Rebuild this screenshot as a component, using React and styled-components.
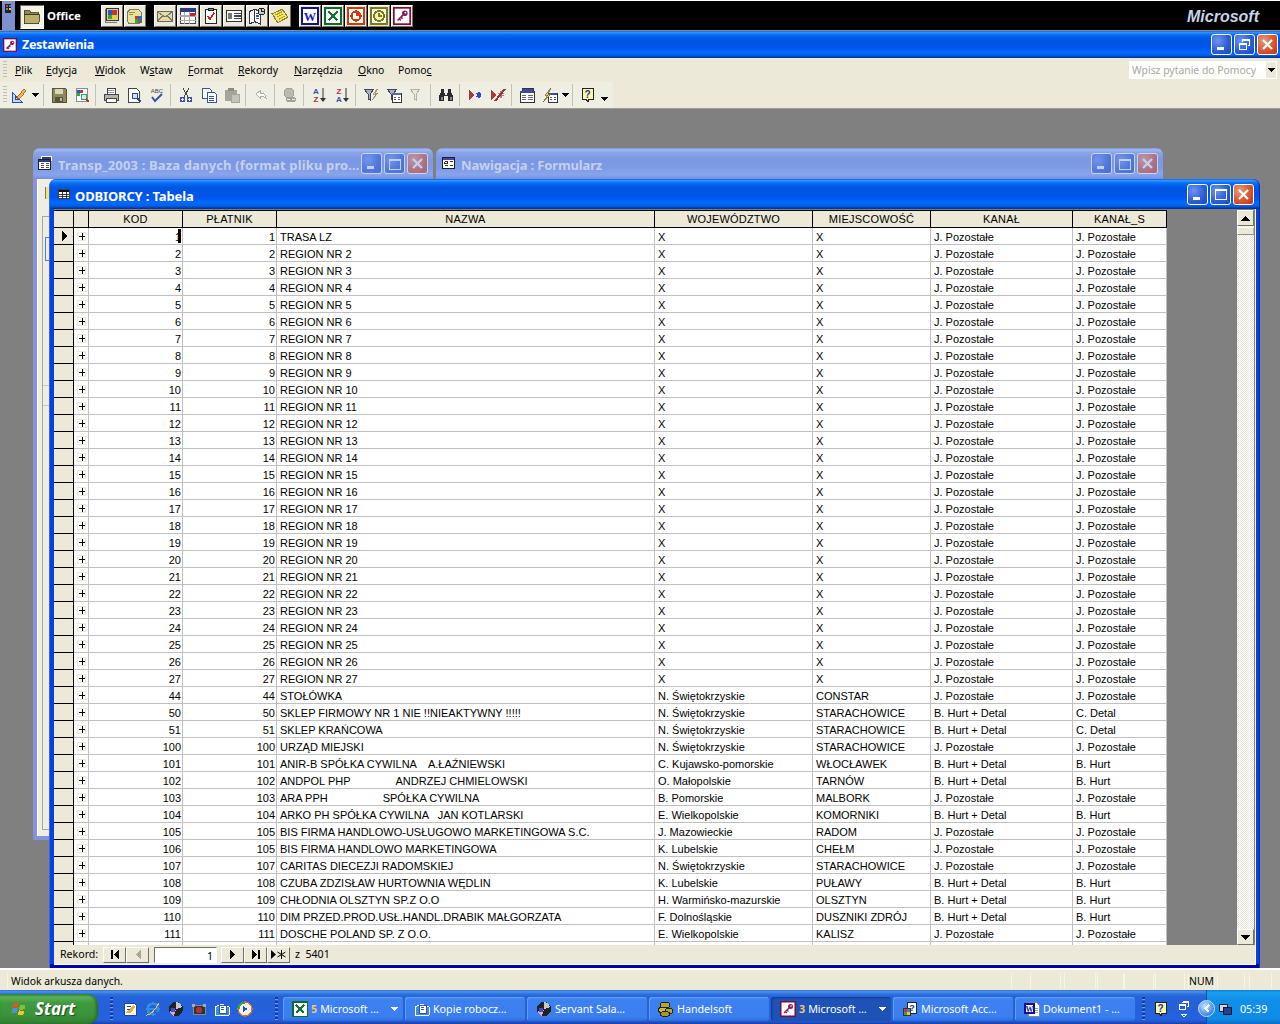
import React from "react";
import styled, { createGlobalStyle, css } from "styled-components";

const UI = `"Noto Sans", "DejaVu Sans", sans-serif`;
const SHEET = `"Liberation Sans", Arial, sans-serif`;
const BEIGE = "#ece9d8";
const ACTIVE_TITLE = `linear-gradient(180deg,#0058e6 0%,#3a93ff 4%,#288eff 7%,#127dff 10%,#036ffc 14%,#0262ee 20%,#0057e5 28%,#0054e3 40%,#0055eb 58%,#005bf5 68%,#026afe 78%,#0062ef 88%,#0052d6 93%,#0040ab 96%,#003092 100%)`;

const Global = createGlobalStyle`
  html, body { margin: 0; padding: 0; background: #808080; }
  * { box-sizing: border-box; }
`;

const Page = styled.div`
  width: 1280px; height: 1024px; display: flex; flex-direction: column; overflow: hidden;
  font: 10.4px ${UI}; color: #000; background: ${BEIGE};
`;

/* ---------- office bar ---------- */
const OfficeBar = styled.div`
  height: 31px; flex: none; display: flex; align-items: flex-start; background: #000;
  border-top: 1px solid #fff; border-bottom: 1px solid #8d8c80; padding-left: 2px;
`;
const OfficeCorner = styled.div`
  width: 13px; height: 29px; background: #7f8fd0; padding: 2px 1px; flex: none; display: flex; align-items: flex-start;
`;
const OfficeFolder = styled.div`
  width: 24px; height: 24px; margin: 4px 0 0 5px; background: #f4f2e4; flex: none; display: flex; align-items: center; justify-content: center;
  border: 1px solid; border-color: #716f64 #fff #fff #716f64;
`;
const OfficeLabel = styled.div`
  width: 57px; padding: 7px 0 0 3px; color: #fff; font: 700 11.4px/16px ${UI}; flex: none;
`;
const OfficeGroup = styled.div`
  display: flex; gap: 1px; margin: 4px 0 0 ${p => p.$gap}px; flex: none;
`;
const OfficeButton = styled.div`
  width: 22px; height: 22px; background: ${BEIGE}; display: flex; align-items: center; justify-content: center;
  border: 1px solid; border-color: #fff #716f64 #716f64 #fff;
`;
const Brand = styled.div`
  margin: 6px 21px 0 auto; font: italic 700 16px/20px ${SHEET}; color: #c9d3e8;
`;

/* ---------- title bars ---------- */
const TitleBar = styled.div`
  flex: none; display: flex; align-items: center; color: #fff; background: ${ACTIVE_TITLE};
  font: 700 13px/18px ${UI}; white-space: nowrap;
  height: ${p => p.$h || 26}px;
`;
const ChildTitleBar = styled(TitleBar)`
  margin: 0 -3px 0 -4px; border-radius: 7px 7px 0 0;
`;
const InactiveBar = styled(TitleBar)`
  background: linear-gradient(180deg,#7b97e2 0%,#a3b9ee 6%,#8aa5e8 14%,#7c98e3 35%,#7d9ae5 65%,#88a5ec 85%,#7690db 100%);
  color: #c4d0f0; border-radius: 7px 7px 0 0;
`;
const TitleIcon = styled.span`
  display: flex; flex: none; margin: 0 ${p => p.$r}px 0 ${p => p.$l}px;
`;
const TitleText = styled.span`
  flex: 1; min-width: 0; overflow: hidden; letter-spacing: ${p => p.$ls || 0}px; padding-top: ${p => p.$pt || 0}px;
  font-size: ${p => p.$fs || 13}px;
`;
const Controls = styled.div`
  display: flex; gap: 2px; flex: none; margin-right: ${p => p.$mr}px;
`;
const WinButton = styled.div`
  width: 21px; height: 21px; border-radius: 3px; border: 1px solid #fff; display: flex; align-items: center; justify-content: center;
  background: ${p => p.$close
    ? "radial-gradient(circle at 30% 30%, #e89a80, #d9562c 55%, #b8351a)"
    : "radial-gradient(circle at 30% 30%, #6f94f0, #2e5fd8 55%, #1c45c0)"};
  ${p => p.$faded && css`opacity: .55;`}
`;

/* ---------- menu & toolbar ---------- */
const MenuBar = styled.div`
  height: 24px; flex: none; display: flex; align-items: center; background: ${BEIGE}; padding-left: 3px;
`;
const Grab = styled.div`
  width: 4px; height: 18px; flex: none;
  background: repeating-linear-gradient(180deg,#c1beb0 0 1px,transparent 1px 3px);
`;
const MenuItem = styled.div`
  width: ${p => p.$w}px; flex: none; line-height: 16px;
  u { text-underline-offset: 1px; }
`;
const HelpBox = styled.div`
  margin: 0 3px 0 auto; width: 148px; height: 18px; background: #fff; display: flex; align-items: center;
  color: #a8a69a; padding-left: 3px;
`;
const HelpText = styled.span` flex: 1; `;
const HelpDrop = styled.span`
  width: 12px; height: 18px; background: ${BEIGE}; display: flex; align-items: center; justify-content: center; border: 1px solid #fff;
`;
const ToolRow = styled.div`
  height: 27px; flex: none; background: ${BEIGE}; border-bottom: 1px solid #9d9c8f; display: flex;
`;
const ToolStrip = styled.div`
  width: 613px; display: flex; align-items: center; background: #efeee2; padding-left: 3px; height: 26px;
`;
const ToolBtn = styled.div`
  width: 23px; height: 22px; flex: none; display: flex; align-items: center; justify-content: center;
`;
const ToolDrop = styled.div`
  width: ${p => p.$w || 10}px; flex: none; display: flex; justify-content: center; padding-top: ${p => p.$pt || 0}px;
`;
const ToolSep = styled.div`
  width: 1px; height: 22px; background: #c5c2b3; margin: 0 3px 0 2px; flex: none;
`;

/* ---------- workspace ---------- */
const Workspace = styled.div`
  flex: 1; position: relative; background: #808080; overflow: hidden;
`;
const Win = styled.div`
  position: absolute; left: ${p => p.$x}px; top: ${p => p.$y}px; width: ${p => p.$w}px; height: ${p => p.$h}px;
  display: flex; flex-direction: column;
`;
const BackWin = styled(Win)`
  background: #8592dd; border-radius: 7px 7px 0 0;
`;
const BackBody = styled.div`
  flex: 1; margin: 0 4px 4px; background: #f0eee1; border-left: 1px solid #fff; position: relative; padding: 37px 0 6px 4px;
`;
const BackList = styled.div`
  height: 100%; border: 1px solid #a8a698; border-right: 0; position: relative;
`;
const BackSel = styled.div`
  position: absolute; left: 2px; top: 20px; width: 8px; height: 24px; border: 1px solid #4a7dd0;
`;
const BackLine = styled.div`
  position: absolute; left: 0; right: 0; top: ${p => p.$y}px; height: 1px; background: #c9c7b8;
`;
const BackFile = styled.div`
  position: absolute; left: 7px; top: 8px; width: 6px; height: 12px; background: #efe57a; border-left: 1px solid #777;
`;
const FrontWin = styled(Win)`
  background: #0a3fe0; border-radius: 7px 7px 0 0; padding: 0 3px 3px 4px; border-left: 1px solid #2d6cf0; border-right: 1px solid #002dc8;
  box-shadow: inset 0 -4px 0 #0000b0;
`;
const FrontInner = styled.div`
  flex: 1; min-height: 0; display: flex; flex-direction: column; background: #808080; border: 1px solid #fff; border-width: 0 1px 1px 0;
`;
const SheetArea = styled.div`
  flex: 1; min-height: 0; display: flex; overflow: hidden; padding-top: 1px;
`;
const Sheet = styled.div`
  width: 1113px; flex: none; border-top: 1px solid #000; overflow: hidden;
`;
const Cols = "20px 15px 94px 94px 378px 158px 118px 142px 94px";
const HeadRow = styled.div`
  display: grid; grid-template-columns: ${Cols}; height: 17px;
`;
const HeadCell = styled.div`
  background: ${BEIGE}; border-right: 1px solid #000; border-bottom: 1px solid #000; text-align: center;
  font: 11px/16px ${SHEET}; letter-spacing: .2px;
`;
const Row = styled.div`
  display: grid; grid-template-columns: ${Cols}; height: 17px;
`;
const Selector = styled.div`
  background: ${BEIGE}; border-right: 1px solid #000; border-bottom: 1px solid #000; display: flex; align-items: center; justify-content: center; padding-left: 3px;
`;
const Expander = styled.div`
  background: #fff; border-right: 1px solid #c0c0c0; border-bottom: 1px solid #c0c0c0; padding: 4px 0 0 3px;
`;
const PlusBox = styled.div`
  width: 9px; height: 9px; border: 1px solid ${BEIGE}; display: flex; align-items: center; justify-content: center;
`;
const Cell = styled.div`
  position: relative; background: #fff; border-right: 1px solid #c0c0c0; border-bottom: 1px solid #c0c0c0;
  font: 11px/18px ${SHEET}; white-space: pre; overflow: hidden;
  text-align: ${p => p.$right ? "right" : "left"};
  padding: ${p => p.$right ? "0 1px 0 0" : "0 0 0 3px"};
`;
const Caret = styled.span`
  position: absolute; right: 1px; top: 1px; width: 3px; height: 14px; background: #000;
`;
const Scroll = styled.div`
  width: 17px; flex: none; margin-left: auto; margin-right: 1px; display: flex; flex-direction: column;
  background: repeating-conic-gradient(#e6e4d6 0 25%, #fff 0 50%) 0 0 / 2px 2px;
`;
const ScrollBtn = styled.div`
  height: 16px; flex: none; background: ${BEIGE}; display: flex; align-items: center; justify-content: center;
  border: 1px solid; border-color: #fff #716f64 #716f64 #fff;
`;
const ScrollThumb = styled.div`
  height: 8px; margin-top: 1px; flex: none; background: ${BEIGE}; border: 1px solid; border-color: #fff #b5b3a5 #908e80 #fff;
`;
const ScrollFill = styled.div` flex: 1; `;
const NavBar = styled.div`
  height: 19px; flex: none; background: ${BEIGE}; display: flex; align-items: center; padding-left: 6px;
  font: 10.6px/15px ${UI};
`;
const NavLabel = styled.span` width: 43px; flex: none; `;
const NavBtn = styled.div`
  width: 23px; height: 16px; flex: none; background: ${BEIGE}; display: flex; align-items: center; justify-content: center;
  border: 1px solid; border-color: #fff #716f64 #716f64 #fff;
`;
const NavInput = styled.div`
  width: 63px; height: 16px; margin: 0 4px 0 5px; flex: none; background: #fff; text-align: right; padding-right: 3px;
  border: 1px solid; border-color: #716f64 #fff #fff #716f64; line-height: 16px;
`;
const NavTotal = styled.span` margin-left: 5px; white-space: pre; `;

/* ---------- status & taskbar ---------- */
const StatusBar = styled.div`
  height: 22px; flex: none; background: ${BEIGE}; border-top: 2px solid #fff; display: flex; align-items: center; padding: 2px 8px 0 7px;
`;
const StatusPanel = styled.div`
  height: 16px; flex: ${p => p.$grow ? 1 : "none"}; width: ${p => p.$w ? p.$w + "px" : "auto"}; padding-left: ${p => p.$pl}px;
  line-height: 16px; border-right: 1px solid #f7f5ea; border-left: 1px solid #f7f5ea; margin-right: ${p => p.$mr || 0}px;
  white-space: nowrap;
`;
const Taskbar = styled.div`
  height: 34px; flex: none; position: relative; display: flex; align-items: center; color: #fff; padding-top: 4px;
  background: linear-gradient(180deg,#3168d5 0%,#4993e6 5%,#2e71e0 12%,#2563da 20%,#2460d8 50%,#2562df 86%,#2158d4 92%,#1941a5 100%);
`;
const StartBtn = styled.div`
  width: 98px; height: 30px; flex: none; display: flex; align-items: center; padding-left: 11px; gap: 6px; align-self: flex-start;
  border-radius: 0 10px 10px 0;
  background: linear-gradient(180deg,#388e38 0%,#5db05a 10%,#3f9a3f 30%,#3a933a 70%,#2f7f2f 100%);
  box-shadow: inset -2px 0 3px #2a6a2a;
  font: italic 700 17px/20px ${UI}; text-shadow: 1px 1px 1px #1a4a1a;
`;
const Grip = styled.div`
  width: 3px; height: 24px; flex: none; margin-left: ${p => p.$ml}px;
  background: repeating-linear-gradient(180deg,#0d3ea8 0 2px,#6f9bf0 2px 3px,transparent 3px 4px);
`;
const QuickIcons = styled.div`
  display: flex; margin-left: ${p => p.$ml}px; flex: none;
`;
const QuickIcon = styled.div`
  width: 23px; display: flex; justify-content: center; align-items: center; flex: none;
`;
const Tasks = styled.div`
  display: flex; gap: 2px; margin-left: 5px; flex: none;
`;
const TaskBtn = styled.div`
  width: 120px; height: 24px; border-radius: 3px; display: flex; align-items: center; padding: 0 5px 0 9px; gap: 3px; white-space: nowrap; flex: none;
  font: 10.7px/15px ${UI};
  background: ${p => p.$on ? "#1e52b7" : "linear-gradient(180deg,#4a8df3 0%,#3c80f1 15%,#3a7ef0 85%,#2f6bdc 100%)"};
  box-shadow: ${p => p.$on ? "inset 1px 1px 2px #123a8c" : "inset 1px 1px 0 #5e9cf6"};
`;
const TaskText = styled.span` flex: 1; overflow: hidden; `;
const TaskNum = styled.b` color: #f8c468; margin-right: 3px; `;
const Tray = styled.div`
  position: absolute; right: 0; top: 0; height: 34px; width: 74px; display: flex; align-items: center; padding: 4px 0 0 11px; gap: 7px;
  background: linear-gradient(180deg,#0e7fd8 0%,#17a0ee 8%,#118fe8 30%,#0f8ce6 85%,#0a6cc8 100%);
  border-left: 1px solid #0c4fb0; font: 10.7px/15px ${UI};
`;
const Chevron = styled.div`
  position: absolute; left: -9px; top: 10px; width: 17px; height: 17px; border-radius: 50%;
  background: radial-gradient(circle at 40% 35%, #cfe6ff, #3f8cf0 65%, #1c5ad0); border: 1px solid #cfe0ff;
  display: flex; align-items: center; justify-content: center;
`;
const SmallGroup = styled.div`
  display: flex; margin-left: ${p => p.$ml}px; align-items: center; flex: none; gap: ${p => p.$gap || 0}px;
`;
const Svg = styled.svg` display: block; flex: none; `;

/* ---------- drawings ---------- */
const tile = (c, inner) => (
  <>
    <rect x=".5" y=".5" width="15" height="15" fill="#fff" stroke={c} strokeWidth="2" />
    {inner}
  </>
);
const funnel = (f, s) => <path d="M1 2h10l-4 5v6l-2-1V7z" fill={f} stroke={s} />;
const bolt = <path d="M14 2l-4 5h3l-4 6 6-7h-3l3-4z" fill="#f5d33a" stroke="#666" strokeWidth=".5" />;
const form = (c = "#5d6a9c") => (
  <>
    <rect x="6" y="6" width="9" height="9" fill="#fff" stroke="#333" />
    <rect x="6" y="6" width="9" height="2" fill={c} />
    <path d="M8 10h2M12 10h2M8 12h2M12 12h2" stroke="#555" />
  </>
);
const helpBubble = (
  <>
    <path d="M2 1h11v11H9l-1 3-2-3H2z" fill="#fff8a8" stroke="#222" />
    <text x="7.5" y="10.5" fontSize="10" fontWeight="700" textAnchor="middle" fill="#2232a0" fontFamily="Liberation Sans">?</text>
  </>
);
const ICONS = {
  quad: <><rect width="9" height="12" x="3" y="2" fill="#222" /><rect x="4" y="3" width="3" height="3" fill="#e33" /><rect x="8" y="3" width="3" height="3" fill="#38d" /><rect x="4" y="7" width="3" height="3" fill="#3b4" /><rect x="8" y="7" width="3" height="3" fill="#ec3" /></>,
  folder: <><path d="M1 4V2.500h5L7 4h7v2H1z" fill="#8f8a4c" stroke="#333" strokeWidth=".7" /><path d="M1 14V6h14l-1 8z" fill="#b9b266" stroke="#333" strokeWidth=".7" /></>,
  newdoc: <><path d="M3 1h11v11H3z" fill="#d8d39a" stroke="#333" /><path d="M2 2v12h10" fill="none" stroke="#777" /><rect x="4" y="3" width="4" height="4" fill="#2a56c6" /><rect x="8" y="3" width="4" height="4" fill="#c33" /><rect x="4" y="7" width="4" height="4" fill="#3a3" /><rect x="8" y="7" width="4" height="4" fill="#ec3" /></>,
  opendoc: <><path d="M1 5l3-3h7l3 3v7l-2 3H3l-2-3z" fill="#e9e29a" stroke="#777" /><rect x="8" y="8" width="3" height="3" fill="#c33" /><rect x="11" y="8" width="3" height="3" fill="#36c" /><rect x="8" y="11" width="3" height="3" fill="#3a3" /><rect x="11" y="11" width="3" height="3" fill="#666" /><path d="M3 5h5M3 7h3" stroke="#a09030" /></>,
  mail: <><rect x="1" y="4" width="14" height="9" fill="#e7dca0" stroke="#666" /><path d="M1 4l7 5 7-5M1 13l5-5M15 13l-5-5" fill="none" stroke="#777" /></>,
  cal: <><rect x="1" y="1" width="14" height="14" fill="#fff" stroke="#444" /><rect x="1" y="1" width="14" height="3" fill="#2a3d80" /><path d="M5 4v11M9 4v11M1 8h14M1 12h14" stroke="#aaa" /><rect x="10" y="5" width="4" height="3" fill="#c22" /></>,
  task: <><rect x="3" y="2" width="10" height="13" rx="1" fill="#fff" stroke="#222" /><rect x="6" y="1" width="4" height="2" fill="#888" stroke="#222" /><path d="M5 8l2 3 4-6" fill="none" stroke="#c22" strokeWidth="1.5" /></>,
  card: <><rect x="1" y="3" width="14" height="10" fill="#fff" stroke="#333" /><rect x="2.500" y="5" width="4" height="6" fill="#777" /><path d="M8 6h6M8 8h6M8 10h6" stroke="#445" /></>,
  book: <><path d="M1 4l5-2v11l-5 2zM6 2l5 2v11l-5-2z" fill="#fff" stroke="#334" /><path d="M7 6h3M7 8h3M7 10h3" stroke="#3a50a0" /><circle cx="12" cy="4" r="3" fill="#ccc" stroke="#222" /><path d="M12 2v2h2" stroke="#222" fill="none" /></>,
  note: <><path d="M1 6l9-4 5 7-9 5z" fill="#f5e66a" stroke="#8a8030" /><path d="M4 7l6-3M5 9l6-3M7 11l5-3" stroke="#b0a020" /></>,
  word: tile("#13138a", <text x="8" y="12" textAnchor="middle" fontSize="11" fontWeight="700" fontFamily="Liberation Serif" fill="#1a1ac0">W</text>),
  excel: tile("#0f6b2c", <path d="M4 4l8 8M12 4l-8 8" stroke="#0f7b30" strokeWidth="2" />),
  ppt: tile("#d23c0a", <><circle cx="8" cy="8" r="4" fill="#fff" stroke="#d23c0a" strokeWidth="2" /><path d="M8 8V4a4 4 0 0 1 4 4z" fill="#d23c0a" /></>),
  clock: tile("#7c7c10", <><circle cx="8" cy="8" r="4.500" fill="#f5f2c0" stroke="#7c7c10" strokeWidth="1.4" /><path d="M8 5v3h3" stroke="#7c7c10" fill="none" /></>),
  access: tile("#7a0b3c", <><circle cx="10.500" cy="5.500" r="2.500" fill="#8a1a5a" /><circle cx="11" cy="5" r=".8" fill="#fff" /><path d="M9 7l-5 5M5.500 10.500l1.500 1.500M7 9l1.500 1.500" stroke="#8a1a5a" strokeWidth="1.4" /></>),
  design: <><path d="M1 15V5l10 10z" fill="#c9d6f2" stroke="#2a4aa0" /><path d="M4 12V9l3 3z" fill="#ece9d8" stroke="#2a4aa0" /><path d="M7 9l6-7 2 2-6 7-3 1z" fill="#e9c23a" stroke="#a03030" strokeWidth=".7" /></>,
  save: <><path d="M1 1h13l1 1v13H1z" fill="#8e8a58" stroke="#55533a" /><rect x="4" y="2" width="8" height="5" fill="#d8d6bc" /><rect x="4" y="10" width="8" height="5" fill="#55533a" /><rect x="9" y="11" width="2" height="3" fill="#bdbb9e" /></>,
  dbsearch: <><rect x="2" y="1" width="11" height="13" fill="#fff" stroke="#8a8a8a" /><rect x="3" y="3" width="3" height="3" fill="#2a56c6" /><rect x="6" y="3" width="3" height="3" fill="#c33" /><rect x="3" y="6" width="3" height="3" fill="#3a3" /><circle cx="10" cy="10" r="3" fill="#cfeaf5" stroke="#2a6" /><path d="M12 12l3 3" stroke="#c3332a" strokeWidth="2" /></>,
  print: <><rect x="4" y="1" width="8" height="6" fill="#fff" stroke="#444" /><path d="M1 7h14v6H1z" fill="#b6b4a6" stroke="#444" /><rect x="3" y="11" width="10" height="4" fill="#fff" stroke="#444" /><path d="M5 3h6M5 5h6" stroke="#999" /></>,
  preview: <><path d="M2 1h8l3 3v11H2z" fill="#fff" stroke="#444" /><circle cx="9" cy="9" r="3" fill="#cde2f5" stroke="#2a4a90" /><path d="M11 11l4 4" stroke="#2a4a90" strokeWidth="2" /></>,
  spell: <><text x="8" y="6" textAnchor="middle" fontSize="6" fontFamily="Liberation Sans" fill="#444">ABC</text><path d="M3 10l3 4 7-7" fill="none" stroke="#3850a8" strokeWidth="2" /></>,
  cut: <><path d="M5 1l5 9M11 1l-5 9" stroke="#444" /><circle cx="4.500" cy="12.500" r="2" fill="none" stroke="#3850a8" strokeWidth="1.4" /><circle cx="11.500" cy="12.500" r="2" fill="none" stroke="#3850a8" strokeWidth="1.4" /></>,
  copy: <><path d="M1 1h7l2 2v8H1z" fill="#fff" stroke="#3850a8" /><path d="M6 5h7l2 2v8H6z" fill="#fff" stroke="#3850a8" /><path d="M8 9h5M8 11h5M8 13h5" stroke="#3850a8" /></>,
  paste: <><rect x="1" y="3" width="12" height="11" fill="#a6a59a" /><rect x="4" y="1" width="6" height="3" fill="#8d8c82" /><rect x="7" y="7" width="8" height="8" fill="#c5c4ba" stroke="#a6a59a" /></>,
  undo: <><path d="M3 7l4-3v2c4 0 6 2 6 5-2-2-3-2-6-2v2z" fill="#fff" stroke="#b0ae9f" /></>,
  link: <><circle cx="7" cy="6" r="5" fill="#bab9ad" stroke="#a2a196" /><path d="M5 14a2 2 0 0 1 0-3h4a2 2 0 0 1 0 3zM9 14a2 2 0 0 1 0-3h4a2 2 0 0 1 0 3z" fill="none" stroke="#a2a196" strokeWidth="1.3" /></>,
  sortaz: <><text x="5" y="7" fontSize="8" fontWeight="700" textAnchor="middle" fill="#3850a8" fontFamily="Liberation Sans">A</text><text x="5" y="15" fontSize="8" fontWeight="700" textAnchor="middle" fill="#b03040" fontFamily="Liberation Sans">Z</text><path d="M12 1v12" stroke="#333" /><path d="M9 11h6l-3 4z" fill="#333" /></>,
  sortza: <><text x="5" y="7" fontSize="8" fontWeight="700" textAnchor="middle" fill="#b03040" fontFamily="Liberation Sans">Z</text><text x="5" y="15" fontSize="8" fontWeight="700" textAnchor="middle" fill="#3850a8" fontFamily="Liberation Sans">A</text><path d="M12 1v12" stroke="#333" /><path d="M9 11h6l-3 4z" fill="#333" /></>,
  fsel: <>{funnel("#a8b0c8", "#445")}{bolt}</>,
  fform: <>{funnel("#a8b0c8", "#445")}{form()}</>,
  foff: <>{funnel("#ece9d8", "#b4b2a4")}</>,
  bino: <><path d="M3 2h3v3l1 2v1h2V7l1-2V2h3v3l2 4v5H10V9H6v5H1V9l2-4z" fill="#2a2a2a" /><rect x="2.500" y="10" width="2" height="3" fill="#888" /><rect x="11.500" y="10" width="2" height="3" fill="#888" /></>,
  newrec: <><path d="M2 3l6 5-6 5z" fill="#a8383a" /><path d="M12 5v6M9.500 6.500l5 3M14.500 6.500l-5 3" stroke="#3a40c8" strokeWidth="1.3" /></>,
  delrec: <><path d="M1 3l6 5-6 5z" fill="#a8383a" /><path d="M11 4v7M8 6l6 3M14 6l-6 3" stroke="#8a8a9a" strokeWidth="1.3" /><path d="M5 14L15 2" stroke="#a83030" strokeWidth="2" /></>,
  dbwin: <><rect x="3" y="1" width="11" height="4" fill="#4048a0" stroke="#333" /><rect x="1" y="4" width="14" height="11" fill="#fff" stroke="#333" /><rect x="1" y="4" width="14" height="2" fill="#4048a0" /><path d="M3 8h4M9 8h5M3 10h4M9 10h5M3 12h4M9 12h5" stroke="#666" /></>,
  newobj: <>{form("#4048a0")}<path d="M9 1L3 8h3l-5 7 8-8H6z" fill="#f5d33a" stroke="#444" strokeWidth=".6" /></>,
  help: helpBubble,
  folderdoc: <><path d="M1 6l7-3 7 3v8l-7 1-7-1z" fill="#3f8fd8" stroke="#fff" /><rect x="5" y="4" width="7" height="8" fill="#fff" stroke="#2a5aa8" /><path d="M7 6h3M7 8h3" stroke="#2a5aa8" /></>,
  ball: <><circle cx="8" cy="8" r="7" fill="#222" /><path d="M8 1a7 7 0 0 1 6 5L8 8z" fill="#c8c8c8" /><path d="M1.500 10A7 7 0 0 0 6 15L8 9z" fill="#e8a0c0" /><circle cx="5" cy="9" r="2.500" fill="#3a50d0" /></>,
  coins: <><ellipse cx="7" cy="4" rx="5" ry="3" fill="#b5a82a" stroke="#222" /><ellipse cx="5" cy="9" rx="4.500" ry="3" fill="#cbbd3a" stroke="#222" /><ellipse cx="11" cy="10" rx="4" ry="3" fill="#b5a82a" stroke="#222" /><ellipse cx="7" cy="13" rx="5" ry="2.500" fill="#a8982a" stroke="#222" /></>,
  accessdb: <><rect x="5" y="1" width="9" height="11" fill="#fff" stroke="#222" /><text x="10" y="10" textAnchor="middle" fontSize="9" fontWeight="700" fill="#2232a0" fontFamily="Liberation Sans">?</text><rect x="1" y="7" width="8" height="8" fill="#333" /><rect x="2" y="8" width="3" height="3" fill="#d33" /><rect x="5" y="8" width="3" height="3" fill="#38d" /><rect x="2" y="11" width="3" height="3" fill="#3a3" /><rect x="5" y="11" width="3" height="3" fill="#ec3" /></>,
  worddoc: <><path d="M4 1h8l3 3v11H4z" fill="#fff" stroke="#888" /><rect x="1" y="3" width="9" height="9" fill="#fff" stroke="#13138a" strokeWidth="1.5" /><text x="5.500" y="10.500" textAnchor="middle" fontSize="8" fontWeight="700" fill="#1a1ac0" fontFamily="Liberation Serif">W</text><path d="M11 7h3M11 9h3M11 11h3" stroke="#999" /></>,
  outlook: <><path d="M2 2h10l2 2v10H2z" fill="#fff" stroke="#1a4a9a" /><path d="M3 12l8-8 2 2-4 6z" fill="#f0b030" /><path d="M5 5h4M5 8h3" stroke="#1a4a9a" /></>,
  ie: <><circle cx="8" cy="8" r="5.500" fill="none" stroke="#2f8fe0" strokeWidth="2.500" /><path d="M3 8h10" stroke="#2f8fe0" strokeWidth="2" /><path d="M1 14c3 1 9-4 13-12" fill="none" stroke="#ecc35a" /><path d="M10 11h5l-1 3h-3z" fill="#2563da" /></>,
  cam: <><rect x="2" y="4" width="12" height="9" fill="#333" stroke="#888" /><circle cx="8" cy="9" r="3" fill="#a33" /><rect x="1" y="3" width="3" height="3" fill="#aaa" /><rect x="12" y="3" width="3" height="3" fill="#aaa" /></>,
  media: <><circle cx="8" cy="8" r="7" fill="#f2f2f2" stroke="#e07020" strokeWidth="1.500" /><path d="M1.500 8a6.500 6.500 0 0 1 6.500-6.500" stroke="#3a3" strokeWidth="2" fill="none" /><path d="M6 5l5 3-5 3z" fill="#2050c0" /></>,
  net: <><rect x="2" y="3" width="8" height="7" fill="#cfd8e8" stroke="#123" /><rect x="6" y="6" width="8" height="7" fill="#28408a" stroke="#012" /></>,
  flag: <><path d="M2 3c2-1 3-1 5 0l-1 4c-2-1-3-1-5 0z" fill="#e8502a" /><path d="M8 4c2 1 3 1 5 0l-1 4c-2 1-3 1-5 0z" fill="#7cc23a" /><path d="M1 8c2-1 3-1 5 0l-1 4c-2-1-3-1-5 0z" fill="#4a90e8" /><path d="M7 9c2 1 3 1 5 0l-1 4c-2 1-3 1-5 0z" fill="#f2c81e" /></>,
  table: <><rect x=".5" y="1.500" width="14" height="12" fill="#fff" stroke="#111" /><rect x="1" y="2" width="13" height="3" fill="#111" /><path d="M5 5v8M10 5v8M1 8h13M1 11h13" stroke="#111" /></>,
  formIcon: <><rect x=".5" y="1.500" width="13" height="12" fill="#fff" stroke="#111" /><rect x="1" y="2" width="12" height="2" fill="#4048a0" /><path d="M3 6h3v2H3zM8 6h4M3 10h3M8 10h4" fill="none" stroke="#222" /></>,
  dbfile: <><rect x="4" y="0.500" width="10" height="4" fill="#2a3d80" stroke="#fff" /><rect x=".5" y="3.500" width="13" height="11" fill="#fff" stroke="#111" /><rect x="1" y="4" width="12" height="2" fill="#2a3d80" /><path d="M3 8h3M8 8h4M3 10h3M8 10h4M3 12h3M8 12h4" stroke="#444" /></>,
  tri: <path d="M4 1l7 7-7 7z" fill="#000" />,
  plus: <path d="M4 0v7M1 3.500h6" stroke="#000" strokeWidth="1" />,
};
const I = ({ n, s = 16, box = 16 }) => (
  <Svg width={s} height={s} viewBox={`0 0 ${box} ${box}`} shapeRendering={n.startsWith("sort") || n === "spell" || n === "access" ? undefined : "crispEdges"} aria-hidden="true">
    {ICONS[n]}
  </Svg>
);
const Glyph = ({ d, w = 9, h = 9, c = "#fff", sw = 2, fill = "none" }) => (
  <Svg width={w} height={h} viewBox={`0 0 ${w} ${h}`} aria-hidden="true" shapeRendering="crispEdges">
    <path d={d} stroke={fill === "none" ? c : "none"} strokeWidth={sw} fill={fill} />
  </Svg>
);
const DownTri = ({ c = "#000" }) => <Glyph w={7} h={4} d="M0 0h7L3.500 4z" fill={c} />;

const WinBtns = ({ faded, restore }) => (
  <>
    <WinButton $faded={faded}><Svg width="13" height="13" viewBox="0 0 13 13" aria-hidden="true"><rect x="2" y="9" width="7" height="3" fill="#fff" /></Svg></WinButton>
    <WinButton $faded={faded}>
      {restore
        ? <Svg width="13" height="13" viewBox="0 0 13 13" aria-hidden="true" shapeRendering="crispEdges"><path d="M4.500 3.500V1.500h7v6h-2M4 2.500h7" fill="none" stroke="#fff" /><path d="M1.500 5.500h7v6h-7zM1 6.500h8" fill="none" stroke="#fff" /></Svg>
        : <Svg width="14" height="14" viewBox="0 0 14 14" aria-hidden="true" shapeRendering="crispEdges"><rect x="1.500" y="2.500" width="11" height="10" fill="none" stroke="#fff" /><rect x="1" y="2" width="12" height="2" fill="#fff" /></Svg>}
    </WinButton>
    <WinButton $close $faded={faded}><Svg width="13" height="13" viewBox="0 0 13 13" aria-hidden="true"><path d="M2 2l9 9M11 2l-9 9" stroke="#fff" strokeWidth="2.200" /></Svg></WinButton>
  </>
);

/* ---------- data ---------- */
const POZ = "J. Pozostałe", HD = "B. Hurt + Detal", ST = "STARACHOWICE", NS = "N. Świętokrzyskie";
const rows = [];
for (let i = 1; i <= 27; i++) rows.push([i, i, i === 1 ? "TRASA LZ" : `REGION NR ${i}`, "X", "X", POZ, POZ]);
rows.push(
  [44, 44, "STOŁÓWKA", NS, "CONSTAR", POZ, POZ],
  [50, 50, "SKLEP FIRMOWY NR 1 NIE !!NIEAKTYWNY !!!!!", NS, ST, HD, "C. Detal"],
  [51, 51, "SKLEP KRAŃCOWA", NS, ST, HD, "C. Detal"],
  [100, 100, "URZĄD MIEJSKI", NS, ST, POZ, POZ],
  [101, 101, "ANIR-B SPÓŁKA CYWILNA    A.ŁAŹNIEWSKI", "C. Kujawsko-pomorskie", "WŁOCŁAWEK", HD, "B. Hurt"],
  [102, 102, "ANDPOL PHP               ANDRZEJ CHMIELOWSKI", "O. Małopolskie", "TARNÓW", HD, "B. Hurt"],
  [103, 103, "ARA PPH                  SPÓŁKA CYWILNA", "B. Pomorskie", "MALBORK", POZ, POZ],
  [104, 104, "ARKO PH SPÓŁKA CYWILNA   JAN KOTLARSKI", "E. Wielkopolskie", "KOMORNIKI", HD, "B. Hurt"],
  [105, 105, "BIS FIRMA HANDLOWO-USŁUGOWO MARKETINGOWA S.C.", "J. Mazowieckie", "RADOM", POZ, POZ],
  [106, 105, "BIS FIRMA HANDLOWO MARKETINGOWA", "K. Lubelskie", "CHEŁM", POZ, POZ],
  [107, 107, "CARITAS DIECEZJI RADOMSKIEJ", NS, ST, POZ, POZ],
  [108, 108, "CZUBA ZDZISŁAW HURTOWNIA WĘDLIN", "K. Lubelskie", "PUŁAWY", HD, "B. Hurt"],
  [109, 109, "CHŁODNIA OLSZTYN SP.Z O.O", "H. Warmińsko-mazurskie", "OLSZTYN", HD, "B. Hurt"],
  [110, 110, "DIM PRZED.PROD.USŁ.HANDL.DRABIK MAŁGORZATA", "F. Dolnośląskie", "DUSZNIKI ZDRÓJ", HD, "B. Hurt"],
  [111, 111, "DOSCHE POLAND SP. Z O.O.", "E. Wielkopolskie", "KALISZ", POZ, POZ],
  ["", "", "", "", "", "", ""],
);
const HEAD = ["KOD", "PŁATNIK", "NAZWA", "WOJEWÓDZTWO", "MIEJSCOWOŚĆ", "KANAŁ", "KANAŁ_S"];
const MENU = [
  [31, <><u>P</u>lik</>], [49, <><u>E</u>dycja</>], [45, <><u>W</u>idok</>], [48, <>W<u>s</u>taw</>],
  [50, <><u>F</u>ormat</>], [56, <><u>R</u>ekordy</>], [64, <><u>N</u>arzędzia</>], [40, <><u>O</u>kno</>], [40, <>Pomo<u>c</u></>],
];
const TOOLGROUPS = [
  ["save", "dbsearch"], ["print", "preview", "spell"], ["cut", "copy", "paste"], ["undo"], ["link"],
  ["sortaz", "sortza"], ["fsel", "fform", "foff"], ["bino"], ["newrec", "delrec"],
];
const TASKS = [
  ["excel", "5", "Microsoft …", true], ["folderdoc", "", "Kopie robocz…"], ["ball", "", "Servant Sala…"], ["coins", "", "Handelsoft"],
  ["access", "3", "Microsoft …", true, true], ["accessdb", "", "Microsoft Acc…"], ["worddoc", "", "Dokument1 - …"],
];
const PANELS = [[31, 3], [32, 1], [27, 0], [30, 1], [30, 3], [27, 2], [28, 4], [23, 0]];

export default function App() {
  return (
    <Page>
      <Global />
      <OfficeBar>
        <OfficeCorner><I n="quad" s={11} /></OfficeCorner>
        <OfficeFolder><I n="folder" s={18} /></OfficeFolder>
        <OfficeLabel>Office</OfficeLabel>
        <OfficeGroup $gap={0}>{["newdoc", "opendoc"].map(n => <OfficeButton key={n}><I n={n} s={18} /></OfficeButton>)}</OfficeGroup>
        <OfficeGroup $gap={8}>{["mail", "cal", "task", "card", "book", "note"].map(n => <OfficeButton key={n}><I n={n} s={18} /></OfficeButton>)}</OfficeGroup>
        <OfficeGroup $gap={8}>{["word", "excel", "ppt", "clock", "access"].map(n => <OfficeButton key={n}><I n={n} s={18} /></OfficeButton>)}</OfficeGroup>
        <Brand>Microsoft</Brand>
      </OfficeBar>

      <TitleBar $h={27}>
        <TitleIcon $l={3} $r={5}><I n="access" s={14} /></TitleIcon>
        <TitleText $ls={-0.3} $fs={12.5}>Zestawienia</TitleText>
        <Controls $mr={2}><WinBtns restore /></Controls>
      </TitleBar>

      <MenuBar>
        <Grab />
        <MenuItem $w={8} />
        {MENU.map(([w, t], i) => <MenuItem key={i} $w={w}>{t}</MenuItem>)}
        <HelpBox><HelpText>Wpisz pytanie do Pomocy</HelpText><HelpDrop><DownTri /></HelpDrop></HelpBox>
      </MenuBar>

      <ToolRow>
        <ToolStrip>
          <Grab />
          <ToolBtn><I n="design" /></ToolBtn>
          <ToolDrop $w={11}><DownTri /></ToolDrop>
          <ToolSep />
          {TOOLGROUPS.map((g, i) => (
            <React.Fragment key={i}>
              {g.map(n => <ToolBtn key={n}><I n={n} /></ToolBtn>)}
              <ToolSep />
            </React.Fragment>
          ))}
          <ToolBtn><I n="dbwin" /></ToolBtn>
          <ToolBtn><I n="newobj" /></ToolBtn>
          <ToolDrop $w={9}><DownTri /></ToolDrop>
          <ToolSep />
          <ToolBtn><I n="help" /></ToolBtn>
          <ToolDrop $w={10} $pt={8}><DownTri /></ToolDrop>
        </ToolStrip>
      </ToolRow>

      <Workspace>
        <BackWin $x={33} $y={39} $w={400} $h={692}>
          <InactiveBar $h={31}>
            <TitleIcon $l={5} $r={5}><I n="dbfile" s={15} /></TitleIcon>
            <TitleText $ls={0.15} $pt={2}>Transp_2003 : Baza danych (format pliku pro…</TitleText>
            <Controls $mr={5}><WinBtns faded /></Controls>
          </InactiveBar>
          <BackBody>
            <BackFile />
            <BackList>
              <BackSel />
              <BackLine $y={168} />
              <BackLine $y={188} />
            </BackList>
          </BackBody>
        </BackWin>
        <BackWin $x={436} $y={39} $w={727} $h={60}>
          <InactiveBar $h={31}>
            <TitleIcon $l={6} $r={4}><I n="formIcon" s={15} /></TitleIcon>
            <TitleText $ls={-0.15} $pt={2}>Nawigacja : Formularz</TitleText>
            <Controls $mr={5}><WinBtns faded /></Controls>
          </InactiveBar>
        </BackWin>
        <FrontWin $x={49} $y={70} $w={1211} $h={789}>
          <ChildTitleBar $h={30}>
            <TitleIcon $l={8} $r={4}><I n="table" s={13} /></TitleIcon>
            <TitleText $ls={-0.15} $pt={4}>ODBIORCY : Tabela</TitleText>
            <Controls $mr={5}><WinBtns /></Controls>
          </ChildTitleBar>
          <FrontInner>
            <SheetArea>
              <Sheet>
                <HeadRow>
                  <HeadCell /><HeadCell />
                  {HEAD.map(h => <HeadCell key={h}>{h}</HeadCell>)}
                </HeadRow>
                {rows.map((r, i) => (
                  <Row key={i}>
                    <Selector>{i === 0 && <I n="tri" s={12} />}</Selector>
                    <Expander>
                      {r[0] !== "" && <PlusBox><I n="plus" s={7} box={7} /></PlusBox>}
                    </Expander>
                    <Cell $right>{r[0]}{i === 0 && <Caret />}</Cell>
                    <Cell $right>{r[1]}</Cell>
                    <Cell>{r[2]}</Cell>
                    <Cell>{r[3]}</Cell>
                    <Cell>{r[4]}</Cell>
                    <Cell>{r[5]}</Cell>
                    <Cell>{r[6]}</Cell>
                  </Row>
                ))}
              </Sheet>
              <Scroll>
                <ScrollBtn><Glyph w={9} h={5} d="M4.500 0L9 5H0z" fill="#000" /></ScrollBtn>
                <ScrollThumb />
                <ScrollFill />
                <ScrollBtn><Glyph w={9} h={5} d="M0 0h9L4.500 5z" fill="#000" /></ScrollBtn>
              </Scroll>
            </SheetArea>
            <NavBar>
              <NavLabel>Rekord:</NavLabel>
              <NavBtn><Glyph w={8} h={9} d="M0 0h2v9H0zM8 0v9L3 4.500z" fill="#000" /></NavBtn>
              <NavBtn><Glyph w={6} h={9} d="M6 0v9L1 4.500z" fill="#a8a698" /></NavBtn>
              <NavInput>1</NavInput>
              <NavBtn><Glyph w={6} h={9} d="M0 0v9l5-4.500z" fill="#000" /></NavBtn>
              <NavBtn><Glyph w={8} h={9} d="M0 0v9l5-4.500zM6 0h2v9H6z" fill="#000" /></NavBtn>
              <NavBtn>
                <Svg width="15" height="9" viewBox="0 0 15 9" aria-hidden="true">
                  <path d="M0 0v9l5-4.500z" fill="#000" />
                  <path d="M10.500 0v9M6.500 2l8 5M14.500 2l-8 5" stroke="#000" />
                </Svg>
              </NavBtn>
              <NavTotal>z  5401</NavTotal>
            </NavBar>
          </FrontInner>
        </FrontWin>
      </Workspace>

      <StatusBar>
        <StatusPanel $grow $mr={18} $pl={3}>Widok arkusza danych.</StatusPanel>
        {PANELS.map(([w, mr], i) => (
          <StatusPanel key={i} $w={w} $mr={mr} $pl={i === 5 ? 0 : 3}>{i === 5 ? "NUM" : ""}</StatusPanel>
        ))}
      </StatusBar>

      <Taskbar>
        <StartBtn><I n="flag" s={18} />Start</StartBtn>
        <Grip $ml={12} />
        <QuickIcons $ml={5}>
          {["outlook", "ie", "ball", "cam", "folderdoc", "media"].map(n => <QuickIcon key={n}><I n={n} /></QuickIcon>)}
        </QuickIcons>
        <Grip $ml={19} />
        <Tasks>
          {TASKS.map(([ic, num, t, drop, on], i) => (
            <TaskBtn key={i} $on={on}>
              <I n={ic} />
              <TaskText>{num && <TaskNum>{num}</TaskNum>}{t}</TaskText>
              {drop && <DownTri c="#fff" />}
            </TaskBtn>
          ))}
        </Tasks>
        <Grip $ml={7} />
        <SmallGroup $ml={8} $gap={7}>
          <I n="help" />
          <Svg width="16" height="20" viewBox="0 0 16 20" aria-hidden="true" shapeRendering="crispEdges">
            <path d="M6.500 2.500h6v5h-2M6 3.500h6M3.500 5.500h6v5h-6zM3 6.500h6M5 15h6l-3 3z" fill="none" stroke="#fff" />
          </Svg>
        </SmallGroup>
        <Tray>
          <Chevron><Glyph w={6} h={9} d="M5 1L1.500 4.500 5 8" c="#fff" /></Chevron>
          <I n="net" s={15} />
          <span>05:39</span>
        </Tray>
      </Taskbar>
    </Page>
  );
}
